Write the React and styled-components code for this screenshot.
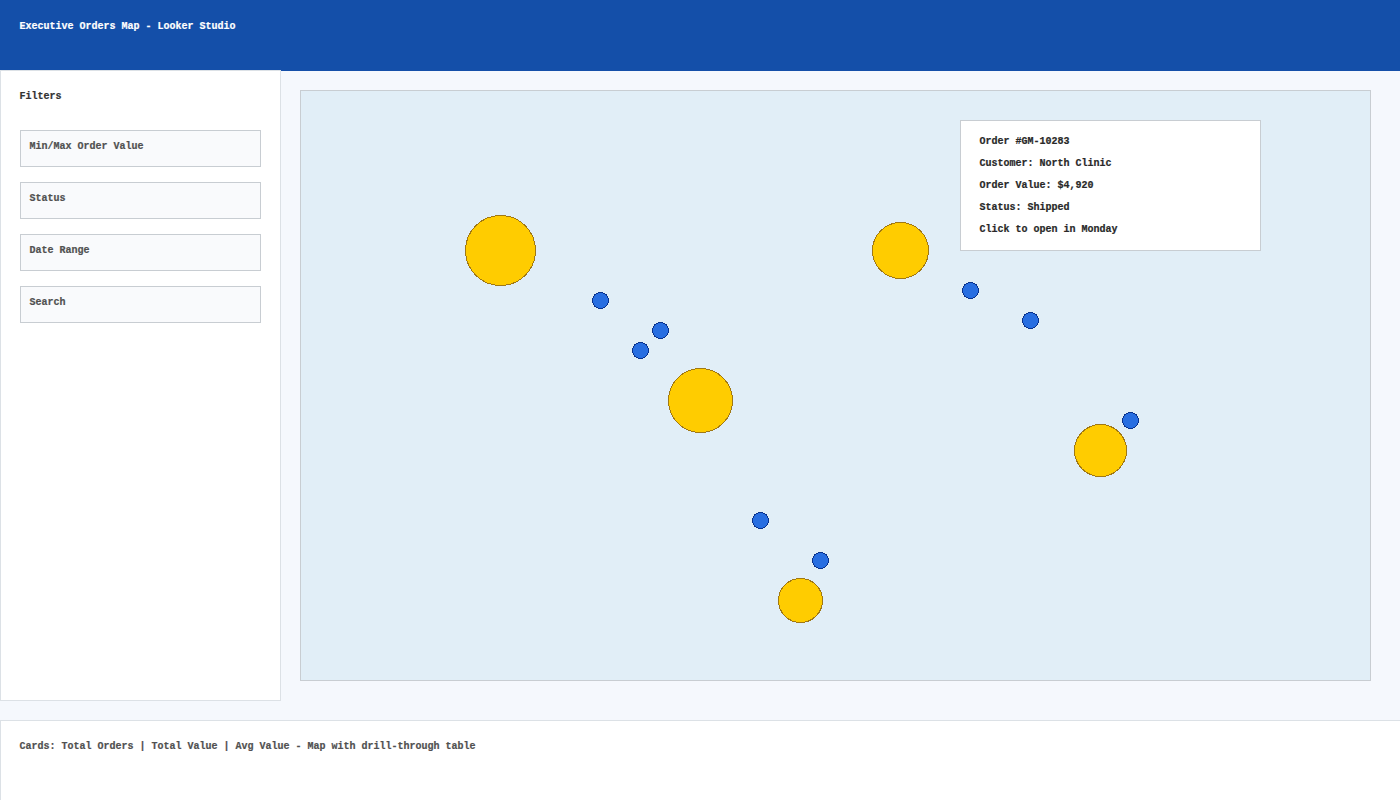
import React from "react";
import styled, { createGlobalStyle } from "styled-components";

const GlobalStyle = createGlobalStyle`
  *, *::before, *::after { box-sizing: border-box; }
  body {
    margin: 0;
    overflow: hidden;
    background: #f5f8fd;
    font: bold 10px/14px "Liberation Mono", "Courier New", monospace;
    -webkit-text-stroke: 0.2px currentColor;
  }
`;

const Page = styled.div`
  display: flex;
  flex-direction: column;
  width: 100%;
  height: 800px;
  overflow: hidden;
`;

const Header = styled.header`
  flex: none;
  height: 71px;
  padding: 20px 19.5px;
  background: #144fa9;
  color: #ffffff;
`;

const Title = styled.h1`
  margin: 0;
  font: inherit;
`;

const Main = styled.main`
  display: flex;
  flex: none;
  gap: 19px;
  height: 630px;
`;

const Sidebar = styled.aside`
  flex: none;
  width: 281px;
  height: 631px;
  margin-top: -1px;
  padding: 19px;
  border: 1px solid #dce1e6;
  background: #ffffff;
  color: #323232;
`;

const SidebarTitle = styled.h2`
  height: 40px;
  margin: 0 0 0 -0.5px;
  font: inherit;
`;

const FilterList = styled.div`
  display: flex;
  flex-direction: column;
  gap: 15px;
`;

const FilterField = styled.div`
  height: 37px;
  padding: 9px 8.5px;
  border: 1px solid #c8cdd2;
  background: #f9fafc;
  color: #505050;
`;

const MapPanel = styled.section`
  position: relative;
  flex: none;
  width: 1071px;
  height: 591px;
  margin-top: 19px;
  border: 1px solid #c8cdd2;
  background: #e1eef7;
`;

const MarkerLayer = styled.svg`
  display: block;
  width: 1069px;
  height: 589px;
  shape-rendering: crispEdges;
`;

const Marker = styled.circle`
  fill: ${(p) => (p.$cluster ? "#ffcc00" : "#286ee1")};
  stroke: ${(p) => (p.$cluster ? "#a07814" : "#0a328c")};
  stroke-width: 1;
`;

const Tooltip = styled.div`
  position: absolute;
  top: 29px;
  left: 659px;
  display: flex;
  flex-direction: column;
  gap: 8px;
  width: 301px;
  height: 131px;
  padding: 14px 18.5px;
  border: 1px solid #c8cdd2;
  background: #ffffff;
  color: #282828;
`;

const TooltipLine = styled.div`
  white-space: nowrap;
`;

const Footer = styled.footer`
  flex: none;
  height: 80px;
  margin-top: 19px;
  padding: 19px 18.5px;
  border: solid #dce1e6;
  border-width: 1px 0 0 1px;
  background: #ffffff;
  color: #505050;
`;

const filters = ["Min/Max Order Value", "Status", "Date Range", "Search"];

const clusters = [
  { x: 500, y: 250, r: 35 },
  { x: 700, y: 400, r: 32 },
  { x: 900, y: 250, r: 28 },
  { x: 1100, y: 450, r: 26 },
  { x: 800, y: 600, r: 22 },
];

const orders = [
  [600, 300],
  [660, 330],
  [640, 350],
  [970, 290],
  [1030, 320],
  [1130, 420],
  [760, 520],
  [820, 560],
];

const details = [
  "Order #GM-10283",
  "Customer: North Clinic",
  "Order Value: $4,920",
  "Status: Shipped",
  "Click to open in Monday",
];

export default function App() {
  return (
    <>
      <GlobalStyle />
      <Page>
        <Header>
          <Title>Executive Orders Map - Looker Studio</Title>
        </Header>
        <Main>
          <Sidebar>
            <SidebarTitle>Filters</SidebarTitle>
            <FilterList>
              {filters.map((name) => (
                <FilterField key={name}>{name}</FilterField>
              ))}
            </FilterList>
          </Sidebar>
          <MapPanel>
            <MarkerLayer viewBox="300.5 90.5 1069 589">
              {clusters.map((c) => (
                <Marker key={`${c.x}-${c.y}`} $cluster cx={c.x} cy={c.y} r={c.r} />
              ))}
              {orders.map(([x, y]) => (
                <Marker key={`${x}-${y}`} cx={x} cy={y} r={8} />
              ))}
            </MarkerLayer>
            <Tooltip>
              {details.map((line) => (
                <TooltipLine key={line}>{line}</TooltipLine>
              ))}
            </Tooltip>
          </MapPanel>
        </Main>
        <Footer>Cards: Total Orders | Total Value | Avg Value - Map with drill-through table</Footer>
      </Page>
    </>
  );
}
